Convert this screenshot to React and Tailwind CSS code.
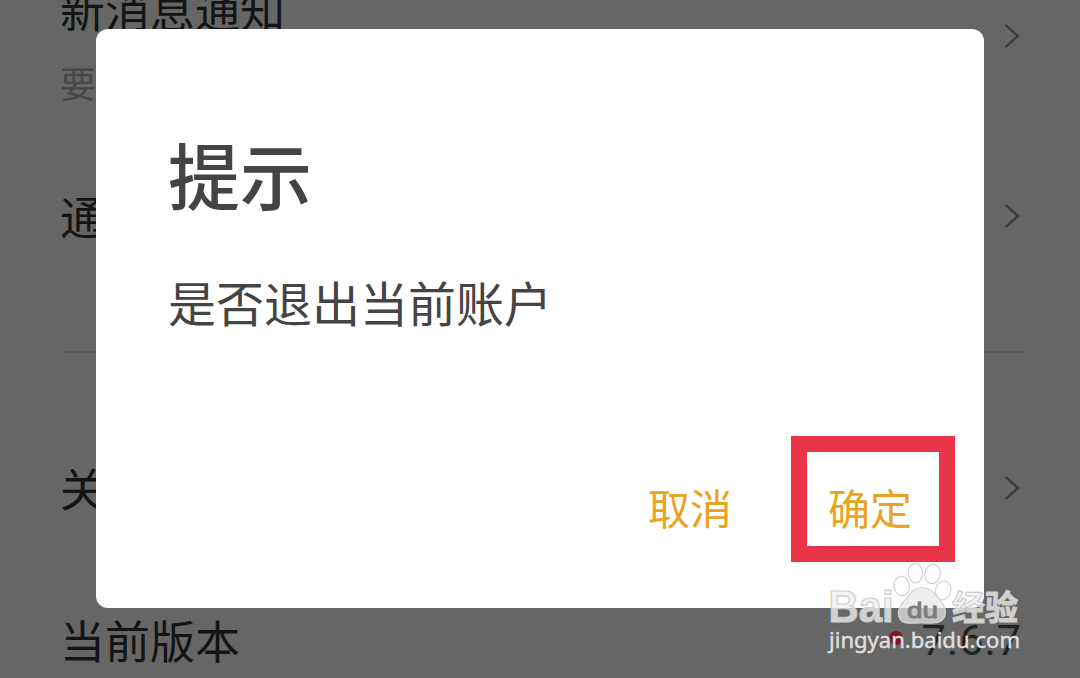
const Chevron = () => (
  <svg width="20" height="28" viewBox="0 0 20 28" fill="none" className="mr-[58px] shrink-0">
    <path d="M3.5 3 L16 14 L3.5 25" stroke="#3d3d3d" strokeWidth="2.4" />
  </svg>
);

const SettingRow = ({ label, hint, className, children }) => (
  <div className={`flex shrink-0 items-center justify-between pl-[60px] ${className}`}>
    {hint ? (
      <div className="pb-[2px]">
        <p className="text-[45px] leading-[94px]">{label}</p>
        <p className="text-[36px] leading-[52px] text-[#474747]">{hint}</p>
      </div>
    ) : (
      <p className="text-[45px] leading-[60px]">{label}</p>
    )}
    {children}
  </div>
);

const Watermark = () => (
  <svg
    width="210"
    height="104"
    viewBox="820 556 210 104"
    className="absolute top-[556px] left-[820px]"
    aria-label="Baidu"
  >
    <g fill="#fff" fillOpacity="0.72" stroke="#d2d2d2" strokeWidth="1.2">
      <ellipse cx="901.7" cy="586" rx="7.7" ry="9.8" transform="rotate(-8 901.7 586)" />
      <ellipse cx="915.4" cy="573.2" rx="7.2" ry="9.8" />
      <ellipse cx="932.5" cy="574" rx="7.7" ry="9.6" transform="rotate(12 932.5 574)" />
      <ellipse cx="943.2" cy="590.3" rx="7.6" ry="9.6" transform="rotate(10 943.2 590.3)" />
      <path
        fill="#e8e8e8"
        d="M922 587.5 C930 587.5 934 593 940 600 C945 606 947 611 944.5 617 C941 624 934 623 922 623 C910 623 902 625 899 617 C897 611 900 605 905 600 C911 593 914 587.5 922 587.5 Z"
      />
    </g>
    <g fill="#f0f0f0" fillOpacity="0.78" stroke="#cdcdcd" strokeWidth="1.2">
      <text x="828.5" y="621.5" fontSize="45" fontWeight="700" textLength="65" lengthAdjust="spacingAndGlyphs" fontFamily="'Liberation Sans', sans-serif">
        Bai
      </text>
      <text x="952" y="619.5" fontSize="34" fontWeight="700" textLength="66" lengthAdjust="spacingAndGlyphs" fontFamily="'Noto Sans CJK SC', sans-serif">
        经验
      </text>
    </g>
    <text x="907" y="618" fontSize="22" fill="#7c7c7c" stroke="#7c7c7c" strokeWidth="0.9" textLength="31" lengthAdjust="spacingAndGlyphs" fontFamily="'Liberation Sans', sans-serif">
      du
    </text>
    <text x="829" y="647.5" fontSize="22" fill="#dedede" stroke="#dedede" strokeWidth="0.5" textLength="191" lengthAdjust="spacingAndGlyphs" fontFamily="'Noto Sans', sans-serif">
      jingyan.baidu.com
    </text>
  </svg>
);

const Dialog = () => (
  <div className="absolute top-[29px] left-[96px] flex h-[579px] w-[888px] flex-col rounded-[12px] bg-white px-[72px] pt-[94px] text-[#444]">
    <h1 className="text-[72px] leading-[100px] font-medium">提示</h1>
    <p className="mt-[45px] text-[48px] leading-[66px]">是否退出当前账户</p>
    <div className="mt-[143px] flex justify-end gap-[96px] text-[42px] leading-[60px] text-[#eaa31e]">
      <button type="button">取消</button>
      <button type="button">确定</button>
    </div>
    <div className="absolute top-[407px] left-[695px] h-[126px] w-[164px] border-[16px] border-[#e83547]" />
  </div>
);

export default function App() {
  return (
    <div className="relative h-[678px] w-[1080px] overflow-hidden bg-[#666] font-['Noto_Sans_CJK_SC',sans-serif] text-[#141414]">
      <div className="-mt-[36px] flex flex-col">
        <SettingRow label="新消息通知" hint="要" className="h-[144px]">
          <Chevron />
        </SettingRow>
        <SettingRow label="通" className="h-[216px]">
          <Chevron />
        </SettingRow>
        <div className="mr-[56px] ml-[64px] mt-[27px] h-[2px] shrink-0 bg-[#5a5a5a]" />
        <SettingRow label="关" className="mt-[71px] h-[128px]">
          <Chevron />
        </SettingRow>
        <SettingRow label="当前版本" className="h-[176px]">
          <div className="mr-[59px] flex items-center gap-[19px]">
            <span className="-mt-[4px] h-[14px] w-[14px] rounded-full bg-[#85141c]" />
            <span className="-mr-[1px] font-['Roboto',sans-serif] text-[43px] leading-[60px] tracking-[1px] text-[#222]">
              7.6.7
            </span>
          </div>
        </SettingRow>
      </div>
      <Dialog />
      <Watermark />
    </div>
  );
}
